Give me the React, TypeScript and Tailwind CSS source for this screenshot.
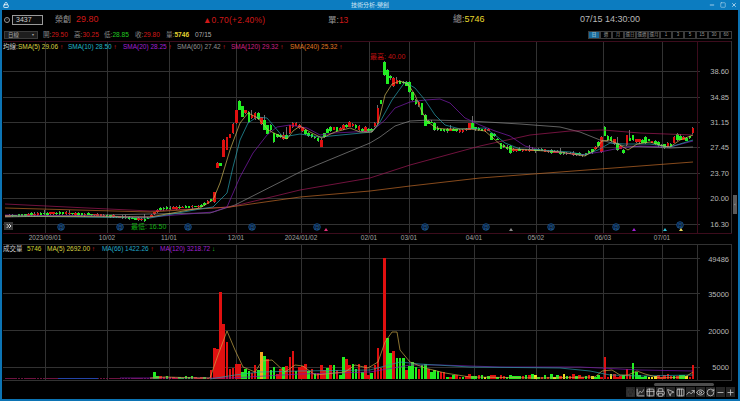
import { ChevronsRight, ChartSpline, Eye, Lock, Minus, MousePointer2, Plus, Printer, RotateCw, Save, Table2, TrendingUp, Columns3, Square, X } from 'lucide-react'

type Pt = [number, number]

const FONT = 'font-["Liberation_Sans","Noto_Sans_CJK_TC",sans-serif]'
const RED = '#e01010'
const GREEN = '#22ee22'
const STEP = 3.15

// close price, in page pixels
const closeKeys: Pt[] = [[5,216],[60,213],[100,215],[145,220],[153,213],[160,209],[200,206],[210,200],[213,192],[216,182],[219,165],[223,148],[227,140],[232,128],[237,115],[240,104],[243,110],[248,117],[255,115],[258,113],[265,127],[272,135],[285,138],[290,125],[295,125],[305,133],[320,141],[325,131],[340,128],[350,124],[360,130],[370,130],[373,127],[378,117],[385,62],[387,75],[393,82],[400,82],[409,85],[413,100],[416,102],[422,110],[425,122],[430,122],[435,128],[438,130],[450,130],[463,131],[470,127],[480,130],[487,130],[493,135],[502,146],[512,150],[527,150],[540,150],[560,153],[583,155],[592,150],[600,142],[603,130],[607,138],[617,145],[623,152],[628,140],[637,142],[647,140],[663,147],[670,145],[677,137],[685,140],[693,133]]

// candles read off the picture: x, top, bottom, up
const bigCandles: [number, number, number, boolean][] = [[213,192,202,true],[215,177,187,true],[218,163,168,true],[224,140,157,true],[227,137,150,true],[233,124,133,true],[237,110,123,true],[240,101,110,false],[243,106,117,false],[248,112,122,false],[255,113,119,true],[258,113,119,false],[262,117,124,true],[264,120,130,false],[268,125,134,false],[271,125,130,false],[274,133,142,false],[289,125,133,true],[292,123,127,true],[320,140,147,true],[378,108,123,true],[385,62,75,false],[388,70,84,false],[394,78,86,true],[409,82,92,false],[413,92,100,false],[416,100,104,false],[422,103,115,false],[425,115,126,false],[434,123,130,false],[468,123,130,true],[472,123,129,false],[492,133,140,false],[502,143,149,false],[511,146,153,false],[600,137,152,true],[603,127,136,false],[607,136,140,false],[618,143,150,false],[623,150,153,false],[628,135,145,true],[632,135,140,false],[647,137,143,false],[674,137,143,true],[677,134,140,false],[693,128,133,true]]

const priceLines: { color: string; pts: Pt[] }[] = [
  { color: '#8a8a8a', pts: [[5,217],[150,214],[210,213],[235,205],[300,172],[370,143],[380,137],[395,126],[410,121],[430,120],[470,121],[520,124],[560,127],[580,132],[600,140],[625,146],[650,147],[670,148],[693,147]] },
  { color: '#a01a58', pts: [[5,204],[150,211],[230,207],[300,190],[370,178],[410,165],[480,146],[530,135],[570,131],[603,130],[640,133],[693,135]] },
  { color: '#c06a28', pts: [[5,208],[150,212],[230,207],[300,197],[370,191],[410,186],[480,178],[560,172],[640,166],[693,162]] },
  { color: '#7e1cb0', pts: [[5,215],[150,217],[213,212],[227,207],[240,177],[253,153],[267,135],[277,127],[290,125],[307,128],[320,135],[335,133],[372,131],[385,120],[395,108],[410,102],[425,100],[440,99],[450,103],[465,118],[480,125],[495,131],[510,136],[525,146],[540,150],[580,155],[600,152],[620,148],[640,146],[670,147],[693,141]] },
  { color: '#26a0b0', pts: [[5,216],[150,218],[200,209],[213,207],[227,193],[233,167],[240,140],[248,123],[257,117],[267,118],[273,125],[283,137],[300,134],[320,137],[372,132],[380,122],[392,100],[405,82],[415,88],[425,100],[435,115],[445,125],[460,129],[485,128],[495,135],[505,143],[520,149],[540,150],[570,152],[585,155],[598,150],[610,143],[625,144],[650,144],[670,147],[693,140]] },
  { color: '#d0b858', pts: [[5,216],[150,217],[200,208],[213,200],[220,183],[230,150],[240,123],[248,113],[258,118],[268,130],[280,136],[287,139],[293,131],[300,126],[310,132],[322,138],[335,132],[350,128],[360,132],[372,132],[378,124],[385,95],[392,84],[400,81],[408,84],[415,95],[422,112],[428,122],[436,128],[445,129],[470,129],[485,131],[493,138],[502,146],[512,149],[530,150],[560,152],[585,156],[595,150],[602,141],[610,140],[620,145],[628,150],[637,144],[650,142],[663,146],[670,147],[680,140],[693,135]] },
]

const volLines: { color: string; pts: Pt[] }[] = [
  { color: '#7a18b0', pts: [[120,378],[230,378],[300,374],[370,372],[410,365],[440,365],[500,367],[580,367],[640,370],[693,371]] },
  { color: '#2a9aa8', pts: [[210,379],[235,375],[260,372],[300,371],[370,370],[400,362],[420,364],[470,367],[560,368],[590,371],[610,375],[640,376],[693,375]] },
  { color: '#c8a848', pts: [[150,378],[165,377],[200,378],[210,378],[218,355],[227,331],[235,350],[243,367],[255,372],[262,361],[272,360],[285,372],[295,365],[303,366],[315,375],[345,372],[355,365],[368,368],[378,362],[385,342],[392,332],[397,332],[400,350],[410,362],[425,368],[445,373],[470,377],[540,378],[595,377],[602,371],[612,370],[620,375],[628,375],[637,371],[645,374],[660,378],[685,377],[693,372]] },
]

// bars read off the picture: x, top, colour
const bigBars: [number, number, string][] = [[155,372,GREEN],[212,370,RED],[215,348,RED],[218,349,RED],[221,292,RED],[224,324,RED],[228,342,RED],[231,369,RED],[234,368,RED],[237,364,RED],[240,364,RED],[243,372,GREEN],[248,371,GREEN],[253,373,RED],[258,370,GREEN],[262,352,'#f0a820'],[265,356,GREEN],[268,359,RED],[271,370,GREEN],[274,367,GREEN],[277,374,RED],[289,357,RED],[292,351,RED],[295,371,GREEN],[322,365,RED],[344,357,GREEN],[347,359,RED],[353,364,GREEN],[378,348,RED],[384,258,RED],[387,338,GREEN],[391,353,GREEN],[394,351,RED],[398,358,GREEN],[401,358,GREEN],[404,358,GREEN],[407,370,RED],[410,366,GREEN],[412,362,GREEN],[415,367,GREEN],[418,369,RED],[422,365,GREEN],[425,364,GREEN],[428,369,RED],[433,370,GREEN],[603,357,RED],[628,369,RED],[632,363,GREEN],[637,372,GREEN],[693,365,RED]]

function rnd(seed: number) {
  const s = Math.sin(seed * 127.1 + 11.7) * 43758.5453
  return s - Math.floor(s)
}

function interp(keys: Pt[], x: number) {
  for (let i = 1; i < keys.length; i++) {
    if (x <= keys[i][0]) {
      const [x0, y0] = keys[i - 1]
      const [x1, y1] = keys[i]
      return y0 + ((y1 - y0) * (x - x0)) / (x1 - x0)
    }
  }
  return keys[keys.length - 1][1]
}

const toPoints = (pts: Pt[]) => pts.map((p) => p.join(',')).join(' ')

const candles = Array.from({ length: 219 }, (_, i) => {
  const x = 5 + STEP * i
  const hit = bigCandles.find((c) => Math.abs(c[0] - x - 1) < 1.6)
  const amp = x < 205 ? 1.2 : x > 440 && x < 590 ? 1.8 : 4
  const mid = interp(closeKeys, x)
  const top = hit ? hit[1] : mid - 0.5 - rnd(i) * amp * 0.6
  const bottom = hit ? hit[2] : mid + 0.5 + rnd(i + 500) * amp * 0.4
  const up = hit ? hit[3] : rnd(i + 200) > 0.6
  const spike = rnd(i + 900) > 0.9 ? 8 : 1.5
  return { x, top, body: bottom - top, up, high: top - rnd(i + 40) * spike, low: bottom + rnd(i + 70) * 1.5 }
})

const volBars = Array.from({ length: 219 }, (_, i) => {
  const x = 5 + STEP * i
  let h = 0.8
  if (x > 150 && x < 210) h = 1 + rnd(i) * 2
  else if (x >= 240 && x < 375) h = 4 + rnd(i) * 11
  else if (x >= 375 && x < 445) h = 6 + rnd(i) * 6
  else if (x >= 445) h = 1.5 + rnd(i) * 3.5
  const r = rnd(i + 300)
  const color = x < 150 ? '#6e1440' : r > 0.85 && x > 445 ? '#f0e020' : r > 0.45 ? RED : GREEN
  const hit = bigBars.find((o) => Math.abs(o[0] - x - 1) < 1.6)
  return hit ? { x, top: hit[1], color: hit[2] } : { x, top: 379 - h, color }
})

const vGrid = [45, 107, 169, 236, 301, 369, 409, 474, 536, 603, 662]
const dates: [number, string][] = [[45,'2023/09/01'],[107,'10/02'],[169,'11/01'],[236,'12/01'],[301,'2024/01/02'],[369,'02/01'],[409,'03/01'],[474,'04/01'],[536,'05/02'],[603,'06/03'],[662,'07/01']]
const prices: [number, string][] = [[71,'38.60'],[97,'34.85'],[122,'31.15'],[147,'27.45'],[173,'23.70'],[198,'20.00'],[224,'16.30']]
const vols: [number, string][] = [[258.5,'49486'],[293.5,'35000'],[330.5,'20000'],[367,'5000']]
const moons: Pt[] = [[61,227],[120,227],[188,227],[252,227],[317,227],[425,227],[486,227],[551,227],[616,227],[680,225]]
const marks: [number, string][] = [[326,'#e0307a'],[511,'#8a8a8a'],[634,'#a020d0'],[665,'#30c0d8'],[681,'#e8d860']]
const frames = ['日', '週', '月', '還日', '還週', '還月', '1', '3', '5', '15', '30', '60']

function PriceChart() {
  return (
    <svg viewBox="2 41 736 203" className="block h-[203px] w-full">
      <g stroke="#323232" strokeWidth="1" shapeRendering="crispEdges">
        {vGrid.map((x) => <line key={x} x1={x} x2={x} y1={41} y2={233} />)}
        {prices.map(([y]) => <line key={y} x1={3} x2={700} y1={y} y2={y} />)}
      </g>
      <g stroke="#3c0c1c" strokeWidth="1" shapeRendering="crispEdges">
        <line x1={3} x2={732} y1={41.5} y2={41.5} />
        <line x1={3} x2={732} y1={233.5} y2={233.5} />
        <line x1={697.5} x2={697.5} y1={41} y2={233} />
      </g>
      <line x1={731.5} x2={731.5} y1={41} y2={233} stroke="#323232" shapeRendering="crispEdges" />
      {candles.map((c) => (
        <g key={c.x} shapeRendering="crispEdges">
          <line x1={c.x + 1.2} x2={c.x + 1.2} y1={c.high} y2={c.low} stroke="#6e6e6e" />
          <rect x={c.x} y={c.top} width={2.6} height={c.body} fill={c.up ? RED : GREEN} />
        </g>
      ))}
      {priceLines.map((l) => (
        <polyline key={l.color} points={toPoints(l.pts)} fill="none" stroke={l.color} strokeWidth="0.7" />
      ))}
      {moons.map(([x, y]) => (
        <g key={x}>
          <circle cx={x} cy={y} r={3.3} fill="#06162c" stroke="#1a5a9a" strokeWidth="0.8" />
          <text x={x} y={y + 1.7} textAnchor="middle" fontSize="4.5" fill="#3a8ad0">月</text>
        </g>
      ))}
      {marks.map(([x, color]) => <polygon key={x} points={`${x},228 ${x + 2},231 ${x - 2},231`} fill={color} />)}
      <text x={131} y={229} fontSize="7" fill="#12b012">最低: 16.50</text>
      <text x={370} y={59} fontSize="7" fill="#c01010">最高: 40.00</text>
      <g fontSize="6.5" fill="#a0a0a0" textAnchor="middle">
        {dates.map(([x, t]) => <text key={x} x={x} y={240}>{t}</text>)}
      </g>
      <g fontSize="7.5" fill="#b8b8b8">
        {prices.map(([y, t]) => <text key={y} x={729} y={y + 3} textAnchor="end">{t}</text>)}
      </g>
    </svg>
  )
}

function VolumeChart() {
  return (
    <svg viewBox="2 244 736 155" className="block h-[155px] w-full">
      <g stroke="#323232" strokeWidth="1" shapeRendering="crispEdges">
        {vGrid.map((x) => <line key={x} x1={x} x2={x} y1={244} y2={380} />)}
        {vols.map(([y]) => <line key={y} x1={3} x2={700} y1={y} y2={y} />)}
        <line x1={697.5} x2={697.5} y1={244} y2={380} />
        <line x1={731.5} x2={731.5} y1={244} y2={380} />
        <line x1={3} x2={732} y1={244.5} y2={244.5} />
        <line x1={3} x2={732} y1={380.5} y2={380.5} />
      </g>
      {volBars.map((b) => (
        <rect key={b.x} x={b.x} y={b.top} width={2.6} height={379 - b.top} fill={b.color} shapeRendering="crispEdges" />
      ))}
      <rect x={58} y={378} width={40} height={1} fill="#2444a8" />
      {volLines.map((l) => (
        <polyline key={l.color} points={toPoints(l.pts)} fill="none" stroke={l.color} strokeWidth="0.7" />
      ))}
      <g fontSize="7.5" fill="#b8b8b8">
        {vols.map(([y, t]) => <text key={y} x={729} y={y + 3} textAnchor="end">{t}</text>)}
      </g>
    </svg>
  )
}

function Toolbar() {
  const icons = [Save, ChartSpline, Table2, Printer, MousePointer2, Columns3, TrendingUp, Eye, RotateCw, Minus, Plus]
  return (
    <div className="absolute right-[3px] bottom-[2px] flex gap-px">
      {icons.map((Icon, i) => (
        <div key={i} className="flex h-[10px] w-[9px] items-center justify-center bg-[#262626]">
          <Icon size={9} strokeWidth={2.2} className={i === 0 ? 'text-[#3a3a3a]' : 'text-[#c4c4c4]'} />
        </div>
      ))}
    </div>
  )
}

export default function App() {
  return (
    <div className={`${FONT} flex h-[401px] w-[740px] flex-col overflow-hidden bg-[#0c74b4] text-[#b0b0b0]`}>
      {/* title bar */}
      <div className="relative flex h-[10px] shrink-0 items-center justify-center bg-[#0c7cc0] text-[6px] text-[#cfe6f4]">
        <Lock size={6} strokeWidth={3} className="absolute top-[2px] left-[3px] text-white" />
        技術分析-榮創
        <div className="absolute top-[2px] right-[3px] flex gap-[5px] text-[#cfe6f4]">
          <Minus size={6} strokeWidth={3} />
          <Square size={6} strokeWidth={2} />
          <X size={6} strokeWidth={3} />
        </div>
      </div>

      <div className="mr-[2px] mb-[2px] ml-[2px] flex min-h-0 flex-1 flex-col bg-black">
        {/* quote row */}
        <div className="flex h-[19px] shrink-0 items-center pt-[1px] text-[9px]">
          <div className="ml-[2px] flex h-[6px] w-[6px] items-center justify-center rounded-full border border-[#999] text-[4px]">›</div>
          <div className="ml-[2px] flex h-[10px] w-[31px] items-center border border-[#9a9a9a] bg-[#0c0c0c] pl-[3px] text-[7px] text-[#ccc]">3437</div>
          <span className="ml-[12px] w-[21px] text-[8px] text-[#999]">榮創</span>
          <span className="w-[127px] text-[#d01818]">29.80</span>
          <span className="w-[125px] text-[8.5px] tracking-[0.2px] text-[#d01818]">▲0.70(+2.40%)</span>
          <span className="w-[125px] text-[8.5px] text-[#999]">單:<span className="text-[#d01818]">13</span></span>
          <span className="w-[127px] text-[#999]">總:<span className="text-[#e8d82c]">5746</span></span>
          <span className="text-[#b8b8b8]">07/15 14:30:00</span>
        </div>

        {/* ohlc row */}
        <div className="flex h-[12px] shrink-0 items-center text-[6.6px]">
          <div className="ml-[2px] flex h-[8px] w-[34px] items-center justify-between border border-[#3c3c3c] bg-[#1e1e1e] px-[3px] text-[5.5px] text-[#aaa]">日線<span className="text-[4px]">▾</span></div>
          <span className="ml-[5px] w-[31px] text-[#888]">開:<span className="text-[#d01818]">29.50</span></span>
          <span className="w-[30px] text-[#888]">高:<span className="text-[#d01818]">30.25</span></span>
          <span className="w-[31px] text-[#888]">低:<span className="text-[#22c822]">28.85</span></span>
          <span className="w-[31px] text-[#888]">收:<span className="text-[#d01818]">29.80</span></span>
          <span className="w-[29px] text-[#888]">量:<span className="font-bold text-[#e0d030]">5746</span></span>
          <span className="text-[#aaa]">07/15</span>
          <div className="mr-[6px] ml-auto flex">
            {frames.map((f, i) => (
              <div key={f} className={`flex h-[8px] w-[12px] items-center justify-center border border-[#3c3c3c] text-[4.5px] ${i === 0 ? 'bg-[#1a6a9a] text-[#d8e8f0]' : 'text-[#999]'}`}>{f}</div>
            ))}
          </div>
        </div>

        {/* price panel */}
        <div className="relative shrink-0">
          <PriceChart />
          <div className="absolute top-[1px] left-[1px] flex h-[9px] items-center text-[6.5px] whitespace-nowrap">
            <span className="w-[15px] text-[#ccc]">均線:</span>
            <span className="w-[50px] text-[#d8d040]">SMA(5) 29.06 <span className="text-[#e02020]">↑</span></span>
            <span className="w-[55px] text-[#20b8c8]">SMA(10) 28.50 <span className="text-[#e02020]">↑</span></span>
            <span className="w-[54px] text-[#a020d0]">SMA(20) 28.25 <span className="text-[#e02020]">↑</span></span>
            <span className="w-[54px] text-[#909090]">SMA(60) 27.42 <span className="text-[#e02020]">↑</span></span>
            <span className="w-[59px] text-[#d02080]">SMA(120) 29.32 <span className="text-[#e02020]">↑</span></span>
            <span className="text-[#e07820]">SMA(240) 25.32 <span className="text-[#e02020]">↑</span></span>
          </div>
          <div className="absolute top-[181px] left-[2px] flex h-[8px] w-[9px] items-center justify-center bg-[#3a3a3a] text-[#e0e0e0]">
            <ChevronsRight size={8} strokeWidth={3} />
          </div>
          <div className="absolute top-[154px] right-px flex h-[19px] w-[4px] items-center justify-center bg-[#5a5a5a] text-[4px] text-[#ddd]">‹</div>
        </div>

        {/* volume panel */}
        <div className="relative min-h-0 flex-1">
          <VolumeChart />
          <div className="absolute top-0 left-[1px] flex h-[10px] items-center text-[6.5px] whitespace-nowrap">
            <span className="w-[24px] text-[#ccc]">成交量</span>
            <span className="w-[20px] text-[#d0d030]">5746</span>
            <span className="w-[55px] text-[#d8d040]">MA(5) 2692.00 <span className="text-[#e02020]">↑</span></span>
            <span className="w-[58px] text-[#20a8c8]">MA(66) 1422.26 <span className="text-[#e02020]">↑</span></span>
            <span className="text-[#a020d0]">MA(120) 3218.72 <span className="text-[#20c020]">↓</span></span>
          </div>
          <div className="absolute right-[24px] bottom-[13px] h-[3px] w-[60px] rounded-sm bg-[#4c4c4c]" />
          <Toolbar />
        </div>
      </div>
    </div>
  )
}
